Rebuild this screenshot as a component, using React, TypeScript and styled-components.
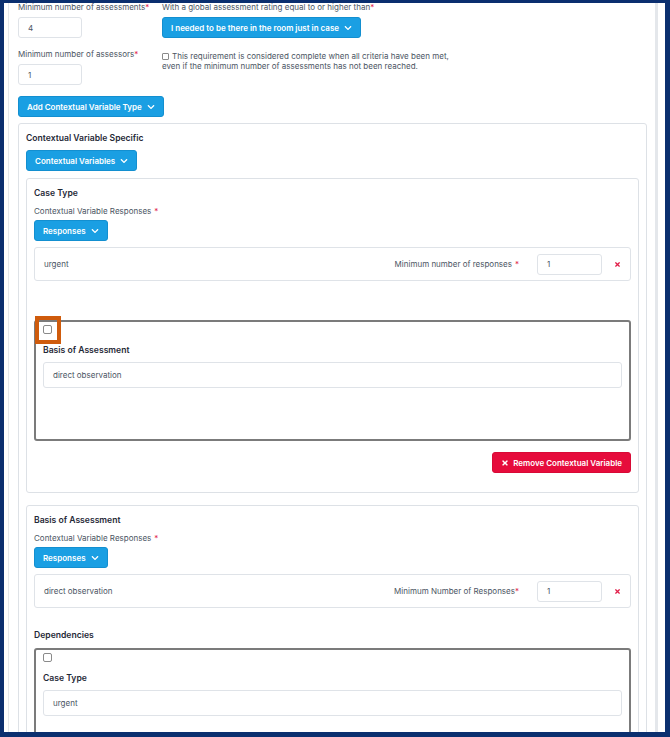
import React from 'react';
import styled, { createGlobalStyle } from 'styled-components';
import { FaChevronDown, FaTimes } from 'react-icons/fa';

const GlobalStyle = createGlobalStyle`
  html, body {
    margin: 0;
    padding: 0;
    background: #ffffff;
  }
  body {
    font-family: Inter, "Open Sans", "Liberation Sans", sans-serif;
    font-size: 8px;
    color: #4b5563;
  }
  * {
    box-sizing: border-box;
  }
`;

const Frame = styled.div`
  width: 670px;
  height: 737px;
  border: solid #0b2f6f;
  border-width: 3px 5px 5px 4px;
  overflow: hidden;
  background: #ffffff;
`;

const Panel = styled.div`
  margin: -1px 7px 0 4px;
  min-height: 760px;
  border-left: 1px solid #e4e7eb;
  border-right: 3px solid #e4e7eb;
  padding: 0 8px 0 9px;
`;

const FieldGrid = styled.div`
  display: grid;
  grid-template-columns: 144px 1fr;
  row-gap: 11px;
`;

const Field = styled.div`
  display: flex;
  flex-direction: column;
  align-items: flex-start;
  gap: 4px;
`;

const Label = styled.label`
  display: block;
  line-height: 11px;
  color: #4b5563;
  white-space: nowrap;
`;

const Req = styled.span<{ $gap?: boolean }>`
  color: #e11d48;
  margin-left: ${(p) => (p.$gap ? '3px' : '0')};
`;

const TextInput = styled.div<{ $w?: number; $h?: number }>`
  width: ${(p) => (p.$w ? `${p.$w}px` : '100%')};
  height: ${(p) => p.$h ?? 21}px;
  border: 1px solid #dfe3e8;
  border-radius: 3px;
  padding: 0 9px;
  display: flex;
  align-items: center;
  color: #4b5563;
  background: #ffffff;
`;

const Button = styled.button<{ $danger?: boolean }>`
  display: inline-flex;
  align-items: center;
  gap: ${(p) => (p.$danger ? '4px' : '5px')};
  height: 21px;
  padding: 0 8px;
  border-radius: 3px;
  border: 1px solid ${(p) => (p.$danger ? '#d80a36' : '#138fd0')};
  background: ${(p) => (p.$danger ? '#e60c3c' : '#1a9fe3')};
  color: #ffffff;
  font-family: inherit;
  font-size: 8px;
  font-weight: 600;
  cursor: pointer;
  svg {
    width: 8px;
    height: 8px;
  }
`;

const CheckText = styled.div`
  line-height: 10px;
  padding-top: 2px;
  color: #4b5563;
`;

const Check = styled.input.attrs({ type: 'checkbox' })`
  appearance: none;
  width: 9px;
  height: 9px;
  margin: 0;
  border: 1px solid #8a8a8a;
  border-radius: 2px;
  background: #ffffff;
  vertical-align: -1px;
  display: block;
`;

const SmallCheck = styled(Check)`
  display: inline-block;
  width: 7px;
  height: 7px;
  margin-right: 3px;
  border-radius: 1px;
`;

const AddRow = styled.div`
  margin-top: 11px;
`;

const Card = styled.div<{ $gap?: number }>`
  border: 1px solid #dde1e6;
  border-radius: 3px;
  padding: 8px 7px;
  margin-top: ${(p) => p.$gap ?? 6}px;
`;

const Title = styled.div`
  font-size: 8.6px;
  font-weight: 600;
  color: #1f2937;
  line-height: 11px;
  margin: 1px 0 6px;
`;

const DepTitle = styled(Title)`
  margin: 22px 0 7px;
`;

const SubLabel = styled(Label)`
  margin: 7px 0 3px;
`;

const ResponseRow = styled.div`
  display: flex;
  align-items: center;
  height: 34px;
  margin-top: 6px;
  border: 1px solid #dfe3e8;
  border-radius: 3px;
  padding: 0 9px 0 9px;
`;

const RowValue = styled.span`
  flex: 1;
  color: #4b5563;
`;

const RowLabel = styled.span`
  color: #4b5563;
  margin-right: 18px;
`;

const DeleteIcon = styled(FaTimes)`
  color: #e11d48;
  width: 7px;
  height: 7px;
  margin-left: 12px;
`;

const DarkBox = styled.div<{ $h: number }>`
  position: relative;
  height: ${(p) => p.$h}px;
  border: 2px solid #7b7b7b;
  border-radius: 3px;
  padding: 3px 7px 0 7px;
`;

const BoxTitle = styled(Title)`
  margin: 11px 0 6px 0;
`;

const Highlight = styled.div`
  position: absolute;
  left: -1px;
  top: -6px;
  width: 26px;
  height: 28px;
  border: 4px solid #cf5b0c;
  pointer-events: none;
`;

const Spacer = styled.div<{ $h: number }>`
  height: ${(p) => p.$h}px;
`;

const Actions = styled.div`
  display: flex;
  justify-content: flex-end;
  margin-top: 11px;
  margin-bottom: 11px;
`;

const App = () => {
  return (
    <>
      <GlobalStyle />
      <Frame>
        <Panel>
          <FieldGrid>
            <Field>
              <Label>
                Minimum number of assessments<Req>*</Req>
              </Label>
              <TextInput $w={64}>4</TextInput>
            </Field>
            <Field>
              <Label>
                With a global assessment rating equal to or higher than<Req>*</Req>
              </Label>
              <Button>
                I needed to be there in the room just in case <FaChevronDown />
              </Button>
            </Field>
            <Field>
              <Label>
                Minimum number of assessors<Req>*</Req>
              </Label>
              <TextInput $w={64}>1</TextInput>
            </Field>
            <CheckText>
              <SmallCheck />
              This requirement is considered complete when all criteria have been met,
              <br />
              even if the minimum number of assessments has not been reached.
            </CheckText>
          </FieldGrid>

          <AddRow>
            <Button>
              Add Contextual Variable Type <FaChevronDown />
            </Button>
          </AddRow>

          <Card>
            <Title>Contextual Variable Specific</Title>
            <Button>
              Contextual Variables <FaChevronDown />
            </Button>

            <Card $gap={7}>
              <Title>Case Type</Title>
              <SubLabel>
                Contextual Variable Responses<Req $gap>*</Req>
              </SubLabel>
              <Button>
                Responses <FaChevronDown />
              </Button>
              <ResponseRow>
                <RowValue>urgent</RowValue>
                <RowLabel>
                  Minimum number of responses<Req $gap>*</Req>
                </RowLabel>
                <TextInput $w={65} $h={21}>1</TextInput>
                <DeleteIcon />
              </ResponseRow>

              <Spacer $h={39} />

              <DarkBox $h={121}>
                <Check />
                <Highlight />
                <BoxTitle>Basis of Assessment</BoxTitle>
                <TextInput $h={26}>direct observation</TextInput>
              </DarkBox>

              <Actions>
                <Button $danger>
                  <FaTimes /> Remove Contextual Variable
                </Button>
              </Actions>
            </Card>

            <Card $gap={12}>
              <Title>Basis of Assessment</Title>
              <SubLabel>
                Contextual Variable Responses<Req $gap>*</Req>
              </SubLabel>
              <Button>
                Responses <FaChevronDown />
              </Button>
              <ResponseRow>
                <RowValue>direct observation</RowValue>
                <RowLabel>
                  Minimum Number of Responses<Req>*</Req>
                </RowLabel>
                <TextInput $w={65} $h={21}>1</TextInput>
                <DeleteIcon />
              </ResponseRow>

              <DepTitle>Dependencies</DepTitle>
              <DarkBox $h={120}>
                <Check />
                <BoxTitle>Case Type</BoxTitle>
                <TextInput $h={26}>urgent</TextInput>
              </DarkBox>
            </Card>
          </Card>
        </Panel>
      </Frame>
    </>
  );
};

export default App;
